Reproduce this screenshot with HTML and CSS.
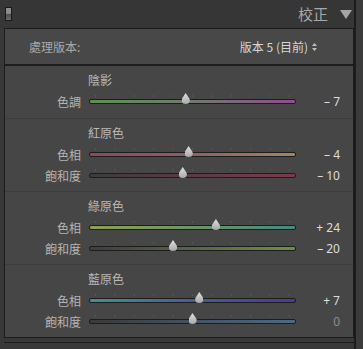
FILE: index.html
```html
<!DOCTYPE html>
<html lang="zh-Hant">
<head>
    <meta charset="UTF-8">
    <meta name="viewport" content="width=device-width, initial-scale=1.0">
    <title>校正</title>
    <link rel="stylesheet" href="styles.css">
</head>

<body>

    <div class="app">
        <div class="main">

            <!-- Panel header -->
            <div class="titlebar">
                <span class="toggle"></span>
                <span class="title">校正</span>
                <svg class="caret" width="12" height="9" viewBox="0 0 12 9">
                    <path d="M0 0 L12 0 L6 9 Z" fill="#a6a6a6"/>
                </svg>
            </div>

            <div class="panel">
                <div class="process">
                    <span class="process-label">處理版本:</span>
                    <span class="process-value">版本 5 (目前)
                        <svg class="updown" width="5" height="8" viewBox="0 0 5 8">
                            <path d="M2.5 0 L5 3 L0 3 Z M0 5 L5 5 L2.5 8 Z" fill="#bdbdbd"/>
                        </svg>
                    </span>
                </div>

                <!-- Shadows -->
                <div class="group first">
                    <div class="group-title">陰影</div>
                    <div class="row">
                        <span class="label">色調</span>
                        <div class="track tint"><span class="thumb" style="--p: 0.465"></span></div>
                        <span class="value">– 7</span>
                    </div>
                </div>

                <!-- Red primary -->
                <div class="group">
                    <div class="group-title">紅原色</div>
                    <div class="row">
                        <span class="label">色相</span>
                        <div class="track red-hue"><span class="thumb" style="--p: 0.48"></span></div>
                        <span class="value">– 4</span>
                    </div>
                    <div class="row">
                        <span class="label">飽和度</span>
                        <div class="track red-sat"><span class="thumb" style="--p: 0.45"></span></div>
                        <span class="value">– 10</span>
                    </div>
                </div>

                <!-- Green primary -->
                <div class="group">
                    <div class="group-title">綠原色</div>
                    <div class="row">
                        <span class="label">色相</span>
                        <div class="track green-hue"><span class="thumb" style="--p: 0.62"></span></div>
                        <span class="value">+ 24</span>
                    </div>
                    <div class="row">
                        <span class="label">飽和度</span>
                        <div class="track green-sat"><span class="thumb" style="--p: 0.40"></span></div>
                        <span class="value">– 20</span>
                    </div>
                </div>

                <!-- Blue primary -->
                <div class="group">
                    <div class="group-title">藍原色</div>
                    <div class="row">
                        <span class="label">色相</span>
                        <div class="track blue-hue"><span class="thumb" style="--p: 0.535"></span></div>
                        <span class="value">+ 7</span>
                    </div>
                    <div class="row">
                        <span class="label">飽和度</span>
                        <div class="track blue-sat"><span class="thumb" style="--p: 0.5"></span></div>
                        <span class="value zero">0</span>
                    </div>
                </div>
            </div>

            <div class="next-panel"></div>
        </div>

        <div class="gutter"></div>
    </div>

</body>

</html>
```

FILE: styles.css
```css
body {
    margin: 0;
    background-color: #383838;
    font-family: "Noto Sans CJK TC", "Noto Sans", sans-serif;
    font-size: 12px;
    color: #b4b4b4;
}

.app {
    display: flex;
    width: 363px;
    height: 349px;
    overflow: hidden;
}

.main {
    width: 354px;
}

.gutter {
    flex: 1;
    border-left: 2px solid #1c1c1c;
    background-color: #3b3b3b;
}

/* Header bar */
.titlebar {
    height: 28px;
    display: flex;
    align-items: center;
    background-color: #363636;
    padding: 0 2px 0 5px;
}

.toggle {
    width: 5px;
    height: 12px;
    border: 1px solid #1a1a1a;
    background: linear-gradient(#8c8c8c 0, #8c8c8c 45%, #4e4e4e 50%, #6a6a6a 100%);
}

.title {
    margin-left: auto;
    font-size: 15px;
    line-height: 16px;
    color: #a8a8a8;
}

.caret {
    margin: 1px 0 0 12px;
}

/* Main panel */
.panel {
    margin-left: 4px;
    border: 1px solid #1c1c1c;
    background-color: #464646;
}

.process {
    height: 35px;
    display: flex;
    align-items: center;
    justify-content: space-between;
    padding: 0 36px 0 24px;
    background-color: #484848;
    border-bottom: 2px solid #1e1e1e;
}

.process-label {
    color: #a8a8a8;
}

.process-value {
    color: #d6d6d6;
    display: flex;
    align-items: center;
    gap: 4px;
}

.group {
    padding: 6px 0 5px;
    border-top: 1px solid #3c3c3c;
}

.group.first {
    border-top: none;
    padding-bottom: 6px;
}

.group-title {
    height: 16px;
    line-height: 16px;
    padding-left: 83px;
    margin-bottom: 3px;
    color: #b8b8b8;
}

.row {
    height: 21px;
    display: flex;
    align-items: center;
}

.label {
    width: 76px;
    text-align: right;
    line-height: 16px;
}

.track {
    position: relative;
    width: 205px;
    height: 3px;
    margin-left: 8px;
    border: 1px solid #1d1d1d;
    border-radius: 2px;
}

/* tick marks above the track */
.track::before {
    content: "";
    position: absolute;
    left: 5px;
    right: 5px;
    top: -5px;
    height: 2px;
    background: linear-gradient(to right, #575757 0, #575757 1px, transparent 1px);
    background-size: calc((100% - 1px) / 10) 100%;
}

.thumb {
    position: absolute;
    top: -7px;
    left: calc(5px + (100% - 10px) * var(--p));
    width: 8px;
    height: 11px;
    margin-left: -4px;
    background: linear-gradient(#e0e0e0, #a8a8a8);
    clip-path: polygon(50% 0, 100% 55%, 100% 75%, 85% 95%, 50% 100%, 15% 95%, 0 75%, 0 55%);
}

.value {
    width: 44px;
    text-align: right;
    font-family: "Noto Sans", sans-serif;
    color: #dcdcdc;
    line-height: 16px;
}

.value.zero {
    color: #8c8c8c;
}

.tint { background: linear-gradient(to right, #5c9053, #707a6e 50%, #8e4c8e); }
.red-hue { background: linear-gradient(to right, #8a4866, #8e6064 50%, #a08662); }
.red-sat { background: linear-gradient(to right, #3c3c3c, #7c3a4a); }
.green-hue { background: linear-gradient(to right, #8ea052, #6a9466 50%, #468a7e); }
.green-sat { background: linear-gradient(to right, #3e3e3e, #6c904a); }
.blue-hue { background: linear-gradient(to right, #4a8e8e, #485e8e 50%, #4c3a8c); }
.blue-sat { background: linear-gradient(to right, #3a3a3a, #4c6a88); }

.next-panel {
    margin: 4px 0 0 4px;
    border-top: 1px solid #1c1c1c;
}
```
